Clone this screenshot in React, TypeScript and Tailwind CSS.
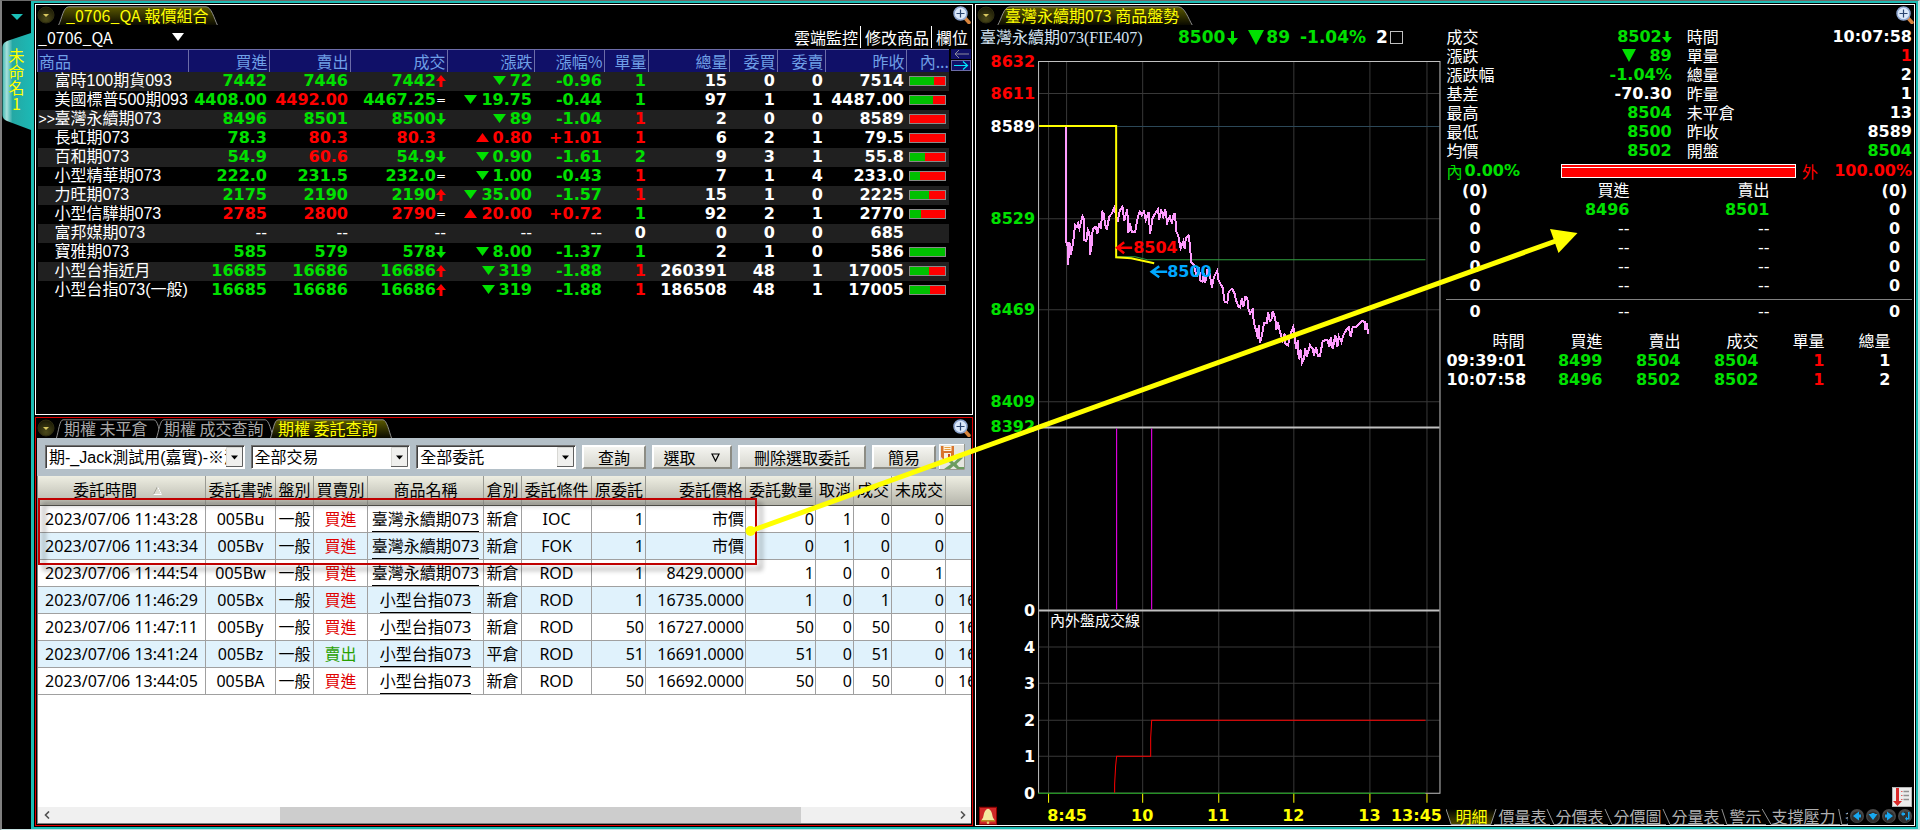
import React from "react";

const NUM = "[font-family:'DejaVu_Sans','Noto_Sans_CJK_TC',sans-serif] font-bold text-[16px]";

type Tone = "g" | "r" | "w";
const tone: Record<Tone, string> = {
  g: "text-[#00e000]",
  r: "text-[#ff0000]",
  w: "text-white",
};

function ArrowMark({ dir }: { dir: "up" | "down" }) {
  return (
    <svg width="10" height="12" viewBox="0 0 10 12" className="inline-block align-[-1px]" aria-hidden="true">
      {dir === "up" ? (
        <path d="M5 0 L10 6 H6.5 V12 H3.5 V6 H0 Z" fill="#ff0000" />
      ) : (
        <path d="M5 12 L0 6 H3.5 V0 H6.5 V6 H10 Z" fill="#00e000" />
      )}
    </svg>
  );
}

function Triangle({ up }: { up?: boolean }) {
  return (
    <svg width="13" height="9" viewBox="0 0 13 9" className="mr-1 inline-block align-[1px]" aria-hidden="true">
      {up ? <path d="M6.500 0 L13 9 H0 Z" fill="#ff0000" /> : <path d="M0 0 H13 L6.500 9 Z" fill="#00e000" />}
    </svg>
  );
}

function Magnifier() {
  return (
    <button aria-label="放大" className="block size-[18px] shrink-0">
      <svg viewBox="0 0 18 18" width="18" height="18">
        <path d="M12 12 L16 16.500" stroke="#d8843c" strokeWidth="3.500" strokeLinecap="round" />
        <circle cx="7.500" cy="7.500" r="6.500" fill="#dbe8fa" stroke="#8ea6d0" strokeWidth="1.500" />
        <path d="M7.500 3.500 V11.500 M3.500 7.500 H11.500" stroke="#2a4470" strokeWidth="1.200" />
      </svg>
    </button>
  );
}

function MenuDot() {
  return (
    <button aria-label="選單" className="block size-[18px] shrink-0">
      <svg viewBox="0 0 18 18" width="18" height="18">
        <defs>
          <radialGradient id="dot" cx="0.5" cy="0.75" r="0.7">
            <stop offset="0" stopColor="#4c4a1a" />
            <stop offset="1" stopColor="#1c1b06" />
          </radialGradient>
        </defs>
        <circle cx="9" cy="9" r="8" fill="url(#dot)" stroke="#2e2c10" />
        <path d="M6 8 H12 L9 11 Z" fill="#d8c860" />
      </svg>
    </button>
  );
}

function Tab({ label, active, className }: { label: string; active?: boolean; className: string }) {
  return (
    <button
      className={`relative h-[19px] shrink-0 whitespace-nowrap pl-2 text-left text-[16px] leading-[19px] ${
        active ? "text-[#ffff00]" : "text-[#a8a8a8]"
      } ${className}`}
    >
      <svg className="absolute inset-0 size-full" viewBox="0 0 120 19" preserveAspectRatio="none" aria-hidden="true">
        <defs>
          <linearGradient id="tabfill" x1="0" y1="0" x2="0" y2="1">
            <stop offset="0" stopColor="#5c5a00" />
            <stop offset="1" stopColor="#0a0a00" />
          </linearGradient>
        </defs>
        <path
          d="M0.5 19 C3 12 4 1 8 0.8 H111 C115 1 117 12 119.500 19"
          fill={active ? "url(#tabfill)" : "#000000"}
          stroke="#8c8c8c"
          vectorEffect="non-scaling-stroke"
        />
      </svg>
      <span className="relative">{label}</span>
    </button>
  );
}

type Quote = {
  name: string;
  bid: [string, Tone];
  ask: [string, Tone];
  last: [string, Tone];
  mark: "up" | "down" | "=" | "" | null;
  chg: [string, Tone];
  pct: string;
  vol: [string, Tone];
  total: string;
  wb: string;
  ws: string;
  prev: string;
  inner: number | null;
};

const quotes: Quote[] = [
  { name: "富時100期貨093", bid: ["7442", "g"], ask: ["7446", "g"], last: ["7442", "g"], mark: "up", chg: ["72", "g"], pct: "-0.96", vol: ["1", "g"], total: "15", wb: "0", ws: "0", prev: "7514", inner: 68 },
  { name: "美國標普500期093", bid: ["4408.00", "g"], ask: ["4492.00", "r"], last: ["4467.25", "g"], mark: "=", chg: ["19.75", "g"], pct: "-0.44", vol: ["1", "g"], total: "97", wb: "1", ws: "1", prev: "4487.00", inner: 65 },
  { name: "臺灣永續期073", bid: ["8496", "g"], ask: ["8501", "g"], last: ["8500", "g"], mark: "down", chg: ["89", "g"], pct: "-1.04", vol: ["1", "r"], total: "2", wb: "0", ws: "0", prev: "8589", inner: 0 },
  { name: "長虹期073", bid: ["78.3", "g"], ask: ["80.3", "r"], last: ["80.3", "r"], mark: "", chg: ["0.80", "r"], pct: "+1.01", vol: ["1", "r"], total: "6", wb: "2", ws: "1", prev: "79.5", inner: 0 },
  { name: "百和期073", bid: ["54.9", "g"], ask: ["60.6", "r"], last: ["54.9", "g"], mark: "down", chg: ["0.90", "g"], pct: "-1.61", vol: ["2", "g"], total: "9", wb: "3", ws: "1", prev: "55.8", inner: 43 },
  { name: "小型精華期073", bid: ["222.0", "g"], ask: ["231.5", "g"], last: ["232.0", "g"], mark: "=", chg: ["1.00", "g"], pct: "-0.43", vol: ["1", "r"], total: "7", wb: "1", ws: "4", prev: "233.0", inner: 29 },
  { name: "力旺期073", bid: ["2175", "g"], ask: ["2190", "g"], last: ["2190", "g"], mark: "up", chg: ["35.00", "g"], pct: "-1.57", vol: ["1", "r"], total: "15", wb: "1", ws: "0", prev: "2225", inner: 54 },
  { name: "小型信驊期073", bid: ["2785", "r"], ask: ["2800", "r"], last: ["2790", "r"], mark: "=", chg: ["20.00", "r"], pct: "+0.72", vol: ["1", "g"], total: "92", wb: "2", ws: "1", prev: "2770", inner: 32 },
  { name: "富邦媒期073", bid: ["--", "w"], ask: ["--", "w"], last: ["--", "w"], mark: null, chg: ["--", "w"], pct: "--", vol: ["0", "w"], total: "0", wb: "0", ws: "0", prev: "685", inner: null },
  { name: "寶雅期073", bid: ["585", "g"], ask: ["579", "g"], last: ["578", "g"], mark: "down", chg: ["8.00", "g"], pct: "-1.37", vol: ["1", "g"], total: "2", wb: "1", ws: "0", prev: "586", inner: 100 },
  { name: "小型台指近月", bid: ["16685", "g"], ask: ["16686", "g"], last: ["16686", "g"], mark: "up", chg: ["319", "g"], pct: "-1.88", vol: ["1", "r"], total: "260391", wb: "48", ws: "1", prev: "17005", inner: 54 },
  { name: "小型台指073(一般)", bid: ["16685", "g"], ask: ["16686", "g"], last: ["16686", "g"], mark: "up", chg: ["319", "g"], pct: "-1.88", vol: ["1", "r"], total: "186508", wb: "48", ws: "1", prev: "17005", inner: 57 },
];

/* Prices are bold; the empty marker "--" is set in the regular weight. */
function Price({ v }: { v: string }) {
  return v === "--" ? <span className="font-normal text-white">--</span> : <>{v}</>;
}

function QuoteTable() {
  const heads = ["買進", "賣出", "成交", "漲跌", "漲幅%", "單量", "總量", "委買", "委賣", "昨收"];
  const td = "p-0 pr-0.5 text-right";
  return (
    <table className="w-full table-fixed border-collapse whitespace-nowrap">
      <colgroup>
        <col />
        <col className="w-[81px]" />
        <col className="w-[81px]" />
        <col className="w-[97px]" />
        <col className="w-[87px]" />
        <col className="w-[70px]" />
        <col className="w-[44px]" />
        <col className="w-[81px]" />
        <col className="w-[48px]" />
        <col className="w-[48px]" />
        <col className="w-[81px]" />
        <col className="w-[43px]" />
      </colgroup>
      <thead>
        <tr className="h-[22px] bg-[#101068] text-[16px] leading-[20px] text-[#6f9fe6]">
          <th className="border-l border-t border-[#6c6ca8] p-0 pl-px text-left font-normal">商品</th>
          {heads.map((h) => (
            <th key={h} className="border-l border-t border-[#6c6ca8] p-0 pr-px text-right font-normal">
              {h}
            </th>
          ))}
          <th className="border-l border-t border-[#6c6ca8] p-0 text-right font-normal">內...</th>
        </tr>
      </thead>
      <tbody className={`${NUM} leading-[16px]`}>
        {quotes.map((q, i) => (
          <tr key={q.name} className={`h-[19px] ${i % 2 === 0 ? "bg-[#202020]" : "bg-black"}`}>
            <td className="p-0 text-[16px] font-normal text-white [font-family:'Liberation_Sans','Noto_Sans_CJK_TC',sans-serif]">
              <span className="flex h-[19px] items-center">
                <span className="w-[17px] shrink-0 pl-px text-[14px]">{i === 2 ? ">>" : ""}</span>
                <span>{q.name}</span>
              </span>
            </td>
            <td className={`${td} ${tone[q.bid[1]]}`}><Price v={q.bid[0]} /></td>
            <td className={`${td} ${tone[q.ask[1]]}`}><Price v={q.ask[0]} /></td>
            <td className={`p-0 pr-px ${tone[q.last[1]]}`}>
              <span className="flex h-[19px] items-center justify-end">
                <Price v={q.last[0]} />
                {q.mark === "up" || q.mark === "down" ? <ArrowMark dir={q.mark} /> : null}
                {q.mark === "=" && <span className="w-[10px] text-center text-[12px] font-normal text-white">=</span>}
                {q.mark === "" && <span className="w-[10px]" />}
              </span>
            </td>
            <td className={`${td} ${tone[q.chg[1]]}`}>
              {q.chg[0] !== "--" && <Triangle up={q.chg[1] === "r"} />}
              <Price v={q.chg[0]} />
            </td>
            <td className={`${td} ${tone[q.chg[1]]}`}><Price v={q.pct} /></td>
            <td className={`${td} ${tone[q.vol[1]]}`}>{q.vol[0]}</td>
            <td className={`${td} text-white`}>{q.total}</td>
            <td className={`${td} text-white`}>{q.wb}</td>
            <td className={`${td} text-white`}>{q.ws}</td>
            <td className={`${td} text-white`}>{q.prev}</td>
            <td className="p-0 px-[3px]">
              {q.inner !== null && (
                <div className="h-[10px] border border-[#8a8a8a] bg-[#ff0000]">
                  <div className="h-full bg-[#00c000]" style={{ width: `${q.inner}%` }} />
                </div>
              )}
            </td>
          </tr>
        ))}
      </tbody>
    </table>
  );
}

function QuotePanel() {
  return (
    <section className="flex h-[411px] flex-col border border-white bg-black text-white">
      <div className="flex h-[20px] items-center gap-[3px] pl-px pr-px">
        <MenuDot />
        <Tab label="_0706_QA 報價組合" active className="w-[160px]" />
        <div className="ml-auto"><Magnifier /></div>
      </div>
      <div className="flex h-[24px] items-center text-[16px] leading-[22px]">
        <button className="flex w-[148px] items-center justify-between pl-0.5">
          _0706_QA
          <svg width="12" height="8" viewBox="0 0 12 8" aria-hidden="true"><path d="M0 0 H12 L6 8 Z" fill="#fff" /></svg>
        </button>
        <div className="ml-auto flex items-center pr-1">
          <button className="pr-0.5">雲端監控</button>
          <button className="border-l border-white px-0.5 pl-1">修改商品</button>
          <button className="border-l border-white pl-1">欄位</button>
        </div>
      </div>
      <div className="flex min-h-0 flex-1 items-start pl-px">
        <div className="min-w-0 flex-1"><QuoteTable /></div>
        <div className="ml-0.5 mr-px flex w-[20px] shrink-0 flex-col gap-px">
          <button aria-label="上一欄" className="h-[10px] bg-[#101068]">
            <svg width="20" height="10" viewBox="0 0 20 10"><path d="M4 5 H18 M8 1 L4 5 L8 9" stroke="#8c8c9c" fill="none" /></svg>
          </button>
          <button aria-label="下一欄" className="h-[11px] border border-[#6c6ca8] bg-[#101068]">
            <svg width="18" height="9" viewBox="0 0 18 9"><path d="M2 4.500 H15 M11 0.500 L15.500 4.500 L11 8.500" stroke="#00e8ff" fill="none" strokeWidth="1.200" /></svg>
          </button>
        </div>
      </div>
    </section>
  );
}

type Order = [string, string, string, string, string, string, string, string, string, string, string, string, string];
const orders: Order[] = [
  ["2023/07/06 11:43:28", "005Bu", "買進", "臺灣永續期073", "新倉", "IOC", "1", "市價", "0", "1", "0", "0", ""],
  ["2023/07/06 11:43:34", "005Bv", "買進", "臺灣永續期073", "新倉", "FOK", "1", "市價", "0", "1", "0", "0", ""],
  ["2023/07/06 11:44:54", "005Bw", "買進", "臺灣永續期073", "新倉", "ROD", "1", "8429.0000", "1", "0", "0", "1", ""],
  ["2023/07/06 11:46:29", "005Bx", "買進", "小型台指073", "新倉", "ROD", "1", "16735.0000", "1", "0", "1", "0", "16"],
  ["2023/07/06 11:47:11", "005By", "買進", "小型台指073", "新倉", "ROD", "50", "16727.0000", "50", "0", "50", "0", "16"],
  ["2023/07/06 13:41:24", "005Bz", "賣出", "小型台指073", "平倉", "ROD", "51", "16691.0000", "51", "0", "51", "0", "16"],
  ["2023/07/06 13:44:05", "005BA", "買進", "小型台指073", "新倉", "ROD", "50", "16692.0000", "50", "0", "50", "0", "16"],
];

function OrderTable() {
  const th = "border-b border-r border-[#9a9a92] border-b-[#55554f] p-0 text-center font-normal";
  const thr = "border-b border-r border-[#9a9a92] border-b-[#55554f] p-0 pr-0.5 text-right font-normal";
  const c = "border-b border-r border-[#a0a0a0] p-0 text-center";
  const r = "border-b border-r border-[#a0a0a0] p-0 pr-px text-right";
  return (
    <table className="w-full table-fixed border-separate border-spacing-0 overflow-hidden whitespace-nowrap text-[16px] leading-[25px] text-black [font-family:'Noto_Sans','Noto_Sans_CJK_TC',sans-serif]">
      <colgroup>
        <col className="w-[168px]" />
        <col className="w-[70px]" />
        <col className="w-[38px]" />
        <col className="w-[54px]" />
        <col className="w-[116px]" />
        <col className="w-[38px]" />
        <col className="w-[70px]" />
        <col className="w-[54px]" />
        <col className="w-[100px]" />
        <col className="w-[70px]" />
        <col className="w-[38px]" />
        <col className="w-[38px]" />
        <col className="w-[54px]" />
        <col />
      </colgroup>
      <thead>
        <tr className="h-[30px] bg-linear-to-b from-[#eeeee2] to-[#b4b4aa]">
          <th className={th}>
            <span className="flex items-center justify-center gap-4 pr-2">
              <span>委託時間</span>
              <svg width="9" height="9" viewBox="0 0 9 9" aria-hidden="true">
                <path d="M4.500 0.500 L0.500 8.500 H8.500 Z" fill="#dcdcd0" stroke="#a4a49a" />
                <path d="M4.500 0.500 L8.500 8.500 H0.500" fill="none" stroke="#ffffff" />
              </svg>
            </span>
          </th>
          <th className={th}>委託書號</th>
          <th className={th}>盤別</th>
          <th className={th}>買賣別</th>
          <th className={th}>商品名稱</th>
          <th className={th}>倉別</th>
          <th className={th}>委託條件</th>
          <th className={thr}>原委託</th>
          <th className={thr}>委託價格</th>
          <th className={thr}>委託數量</th>
          <th className={thr}>取消</th>
          <th className={thr}>成交</th>
          <th className={thr}>未成交</th>
          <th className="border-b border-b-[#55554f] p-0" />
        </tr>
      </thead>
      <tbody>
        {orders.map((o, i) => (
          <tr key={o[1]} className={`h-[27px] ${i % 2 === 1 ? "bg-[#e0f2fc]" : "bg-white"}`}>
            <td className={c}>{o[0]}</td>
            <td className={c}>{o[1]}</td>
            <td className={c}>一般</td>
            <td className={`${c} ${o[2] === "買進" ? "text-[#e00000]" : "text-[#28a000]"}`}>{o[2]}</td>
            <td className={c}>
              <a href="#" className="block">
                <span className="inline-block h-[26px] border-b border-black align-top leading-[27px]">{o[3]}</span>
              </a>
            </td>
            <td className={c}>{o[4]}</td>
            <td className={c}>{o[5]}</td>
            <td className={r}>{o[6]}</td>
            <td className={r}>{o[7]}</td>
            <td className={r}>{o[8]}</td>
            <td className={r}>{o[9]}</td>
            <td className={r}>{o[10]}</td>
            <td className={r}>{o[11]}</td>
            <td className="overflow-hidden border-b border-[#a0a0a0] p-0 pl-3">{o[12]}</td>
          </tr>
        ))}
      </tbody>
    </table>
  );
}

function Dropdown({ label, value, className }: { label: string; value: string; className: string }) {
  return (
    <label className={`relative block h-[24px] border border-[#707070] border-b-white border-r-white bg-white ${className}`}>
      <select aria-label={label} className="block h-[22px] w-full appearance-none overflow-hidden border-l border-t border-[#404040] bg-white pl-0.5 pr-[18px] text-[16px] leading-[20px] text-black [font-family:'Liberation_Sans','Noto_Sans_CJK_TC',sans-serif]">
        <option>{value}</option>
      </select>
      <svg className="pointer-events-none absolute right-px top-px" width="17" height="20" viewBox="0 0 17 20" aria-hidden="true">
        <rect width="17" height="20" fill="#f0f0ee" />
        <path d="M0.500 19 V0.500 H16" stroke="#d8d8d4" fill="none" />
        <path d="M0 19.500 H16.500 V0" stroke="#606060" fill="none" />
        <path d="M5 8.500 H12 L8.500 12.500 Z" fill="#000" />
      </svg>
    </label>
  );
}

function ToolButton({ children, className }: { children: React.ReactNode; className: string }) {
  return (
    <button className={`flex h-[24px] shrink-0 items-center justify-center border-2 border-b-[#8c8c84] border-l-white border-r-[#8c8c84] border-t-white bg-linear-to-b from-[#f4f4f0] to-[#d8d8d0] text-[16px] leading-[20px] text-black ${className}`}>
      {children}
    </button>
  );
}

function OrderPanel() {
  return (
    <section className="flex min-h-0 flex-1 flex-col border border-[#e00000] bg-black p-px pt-0">
      <div className="flex h-[20px] shrink-0 items-center">
        <MenuDot />
        <Tab label="期權 未平倉" className="ml-px w-[106px]" />
        <Tab label="期權 成交查詢" className="-ml-1.5 w-[118px]" />
        <Tab label="期權 委託查詢" active className="-ml-1 w-[122px]" />
        <div className="ml-auto"><Magnifier /></div>
      </div>
      <div className="flex h-[38px] shrink-0 items-center gap-1.5 bg-[#b4c0c8] pl-2 pr-1.5">
        <Dropdown label="帳號" value="期-_Jack測試用(嘉實)-※測" className="w-[200px]" />
        <Dropdown label="交易" value="全部交易" className="w-[160px]" />
        <Dropdown label="委託" value="全部委託" className="w-[160px]" />
        <ToolButton className="w-[64px]">查詢</ToolButton>
        <ToolButton className="w-[80px] gap-4">
          <span>選取</span>
          <svg width="9" height="9" viewBox="0 0 9 9" aria-hidden="true"><path d="M1 1 H8 L4.500 8 Z" fill="none" stroke="#000" strokeWidth="1.200" /></svg>
        </ToolButton>
        <ToolButton className="w-[128px]">刪除選取委託</ToolButton>
        <ToolButton className="w-[64px]">簡易</ToolButton>
        <button aria-label="匯出" className="-ml-[3px] block size-[26px] shrink-0">
          <svg viewBox="0 0 26 26" width="26" height="26">
            <rect width="26" height="26" fill="#e6e6e0" />
            <path d="M0.500 26 V0.500 H26" stroke="#fff" fill="none" />
            <path d="M0 25.500 H25.500 V0" stroke="#98988e" fill="none" />
            <path d="M2 2 H15 V15 H4 L2 13 Z" fill="#d8742c" />
            <rect x="4.500" y="2" width="8" height="5" fill="#fff4e0" />
            <path d="M5.500 3.500 H11.500 M5.500 5.500 H11.500" stroke="#e8a040" />
            <rect x="5" y="9" width="7" height="6" fill="#f8f0e0" />
            <rect x="9" y="10" width="2" height="4" fill="#c84820" />
            <path d="M6 15 H11 L15 18.500 L20 13.500 H24.500 L17.500 20 L20 23 H25 V25 H18 L14.500 22 L11 25 H5 L12 20 Z" fill="#6c9c60" />
          </svg>
        </button>
      </div>
      <div className="flex min-h-0 flex-1 flex-col border-b border-l border-[#808080] bg-white">
        <div className="min-h-0 flex-1 overflow-hidden"><OrderTable /></div>
        <div className="flex h-[16px] shrink-0 bg-[#f0f0f0]">
          <button aria-label="向左捲動" className="flex w-[17px] items-center justify-center">
            <svg width="6" height="8" viewBox="0 0 6 8"><path d="M5 0.500 L1.500 4 L5 7.500" stroke="#505050" strokeWidth="1.600" fill="none" /></svg>
          </button>
          <div className="flex flex-1">
            <div className="w-[25%]" />
            <div className="w-[58%] bg-[#cdcdcd]" />
          </div>
          <button aria-label="向右捲動" className="flex w-[17px] items-center justify-center">
            <svg width="6" height="8" viewBox="0 0 6 8"><path d="M1 0.500 L4.500 4 L1 7.500" stroke="#505050" strokeWidth="1.600" fill="none" /></svg>
          </button>
        </div>
      </div>
    </section>
  );
}

/* Index trace, in thirds of a pixel measured from the left edge of the chart pane. */
const trace =
  "291,380 291,727 295,729 297,793 301,727 304,765 308,750 312,727 318,675 323,680 327,670 331,685 336,665 340,648 344,655 346,720 352,722 356,690 361,700 363,763 367,740 371,685 380,680 385,700 390,670 395,685 400,635 404,640 407,668 413,690 420,650 428,640 436,622 441,650 446,660 452,630 460,620 465,662 474,628 478,697 482,670 488,695 498,695 506,650 512,634 518,645 524,633 530,660 538,635 543,700 550,655 558,640 566,628 570,658 576,628 582,650 588,628 594,668 602,650 608,670 614,640 618,640 620,690 628,710 634,745 642,725 646,745 650,715 658,705 662,735 666,785 674,795 682,830 690,800 692,840 700,845 704,820 708,848 714,810 720,812 728,862 734,830 744,812 748,840 756,855 760,862 766,905 774,907 778,875 788,865 796,880 800,900 808,920 812,922 818,895 822,920 828,890 834,892 838,928 842,940 850,928 854,970 862,995 866,1015 868,975 872,1027 878,1005 884,968 892,968 897,937 901,962 906,960 910,933 918,955 921,990 926,965 932,995 940,1020 946,1000 948,1030 956,1035 960,1015 966,995 972,980 976,1005 980,1045 986,1020 988,1077 994,1048 998,1087 1004,1075 1008,1045 1012,1070 1022,1035 1030,1045 1034,1065 1040,1040 1046,1067 1052,1067 1060,1022 1068,1020 1074,1018 1080,1040 1084,1012 1090,1045 1098,1005 1104,1040 1108,1008 1116,1025 1122,1005 1130,990 1138,980 1144,1010 1150,980 1160,980 1168,972 1178,962 1186,965 1188,990 1192,970 1196,1000";

const yLabels: [string, number, string][] = [
  ["8632", 61, "#ff0000"],
  ["8611", 93, "#ff0000"],
  ["8589", 126, "#ffffff"],
  ["8529", 218, "#00e000"],
  ["8469", 309, "#00e000"],
  ["8409", 401, "#00e000"],
  ["8392", 426, "#00e000"],
  ["0", 609, "#ffffff"],
  ["4", 646, "#ffffff"],
  ["3", 682, "#ffffff"],
  ["2", 719, "#ffffff"],
  ["1", 755, "#ffffff"],
  ["0", 792, "#ffffff"],
];

function Chart() {
  return (
    <svg viewBox="977 50 464 775" className="block min-h-0 w-full flex-1 overflow-visible" aria-label="走勢圖">
      <g stroke="#383838" fill="none">
        <path d="M1049.500 62 V792 M1067.500 62 V792 M1143.500 62 V792 M1219.500 62 V792 M1294.500 62 V792 M1370.500 62 V792 M1427.500 62 V792" />
        <path d="M1040 93.500 H1440 M1040 218.500 H1440 M1040 309.500 H1440 M1040 401.500 H1440 M1040 646.500 H1440 M1040 682.500 H1440 M1040 719.500 H1440 M1040 755.500 H1440" />
      </g>
      <path d="M1040 126.500 H1440" stroke="#2c4858" />
      <path d="M1039.500 61.500 H1440.500 V792.500 H1039.500 Z" stroke="#c0c0c0" fill="none" />
      <path d="M1040 427 H1440 M1040 610 H1440" stroke="#c0c0c0" strokeWidth="2" />
      <path d="M1039 792.500 H1426" stroke="#009000" />
      <path d="M1117 256.500 H1136 L1148 259.500 H1426" stroke="#30a040" fill="none" />
      <g transform="translate(970 0) scale(0.333333)">
        <polyline points={trace} stroke="#ff9cff" strokeWidth="6" fill="none" shapeRendering="crispEdges" />
      </g>
      <path d="M1040 126 H1117 V257 L1132 258 L1155 263" stroke="#ffff00" strokeWidth="2" fill="none" />
      <path d="M1117.500 428 V609 M1152.500 428 V609" stroke="#ff00ff" />
      <path d="M1115.500 792 V783 L1116.500 765 L1117.500 755.500 H1151.500 V737 L1152.500 719.500 H1426" stroke="#ff0000" fill="none" />
      <path d="M1049.500 793 V802 M1143.500 793 V802 M1219.500 793 V802 M1294.500 793 V802 M1370.500 793 V802 M1427.500 793 V802" stroke="#ffff00" />
      <path d="M1133 247.500 H1119 M1125 242 L1118 247.500 L1125 253" stroke="#ff0000" strokeWidth="2.500" fill="none" />
      <path d="M1168 271.500 H1153 M1160 266 L1152.500 271.500 L1160 277" stroke="#00a8ff" strokeWidth="2.500" fill="none" />
      <g className={NUM}>
        {yLabels.map(([t, y, color]) => (
          <text key={`${t}-${y}`} x="1036" y={y + 6} textAnchor="end" fill={color}>{t}</text>
        ))}
        <text x="1134" y="253" fill="#ff0000">8504</text>
        <text x="1168" y="277" fill="#00a8ff">8500</text>
        <g fill="#ffff00" textAnchor="middle">
          <text x="1068" y="820">8:45</text>
          <text x="1143" y="820">10</text>
          <text x="1219" y="820">11</text>
          <text x="1294" y="820">12</text>
          <text x="1370" y="820">13</text>
          <text x="1417" y="820">13:45</text>
        </g>
      </g>
      <text x="1051" y="625" fill="#fff" className="text-[15px]">內外盤成交線</text>
      <g>
        <rect x="980.500" y="806.500" width="17" height="17" fill="#d02828" stroke="#900000" />
        <path d="M989 808 C985 809 985 814 984 817 L982 820 H996 L994 817 C993 814 993 809 989 808 Z" fill="#f4e8a0" />
        <path d="M982 820 H996" stroke="#b89020" strokeWidth="1.500" />
        <circle cx="989" cy="822" r="1.300" fill="#e8d070" />
      </g>
    </svg>
  );
}

function InfoRow({ a, av, at, b, bv, bt }: { a: string; av: React.ReactNode; at: Tone; b: string; bv: string; bt: Tone }) {
  return (
    <div className="grid h-[19px] shrink-0 grid-cols-2 gap-[15px] text-[16px] leading-[19px]">
      <div className="flex justify-between">
        <span>{a}</span>
        <span className={`${NUM} ${tone[at]}`}>{av}</span>
      </div>
      <div className="flex justify-between">
        <span>{b}</span>
        <span className={`${NUM} ${tone[bt]}`}>{bv}</span>
      </div>
    </div>
  );
}

function DepthTable() {
  const rows: [string, string, string, string][] = [
    ["0", "8496", "8501", "0"],
    ["0", "--", "--", "0"],
    ["0", "--", "--", "0"],
    ["0", "--", "--", "0"],
    ["0", "--", "--", "0"],
  ];
  return (
    <table className={`w-full shrink-0 table-fixed border-separate border-spacing-0 leading-[16px] ${NUM}`}>
      <colgroup>
        <col className="w-[57px]" />
        <col className="w-[126px]" />
        <col className="w-[140px]" />
        <col />
        <col className="w-[35px]" />
      </colgroup>
      <thead>
        <tr className="h-[19px]">
          <th className="p-0 text-center">(0)</th>
          <th className="p-0 text-right font-normal">買進</th>
          <th className="p-0 text-right font-normal">賣出</th>
          <th className="p-0" />
          <th className="p-0 text-center">(0)</th>
        </tr>
      </thead>
      <tbody>
        {rows.map((r, i) => (
          <tr key={i} className="h-[19px]">
            <td className="p-0 text-center">{r[0]}</td>
            <td className="p-0 text-right text-[#00e000]"><Price v={r[1]} /></td>
            <td className="p-0 text-right text-[#00e000]"><Price v={r[2]} /></td>
            <td className="p-0" />
            <td className="p-0 text-center">{r[3]}</td>
          </tr>
        ))}
        <tr className="h-[5px]"><td colSpan={5} className="border-b border-[#808080] p-0" /></tr>
        <tr className="h-[24px]">
          <td className="p-0 text-center">0</td>
          <td className="p-0 text-right"><Price v="--" /></td>
          <td className="p-0 text-right"><Price v="--" /></td>
          <td className="p-0" />
          <td className="p-0 text-center">0</td>
        </tr>
      </tbody>
    </table>
  );
}

function TickTable() {
  const rows = [
    ["09:39:01", "8499", "8504", "8504", "1", "1"],
    ["10:07:58", "8496", "8502", "8502", "1", "2"],
  ];
  const cell = ["text-white", "text-[#00e000]", "text-[#00e000]", "text-[#00e000]", "text-[#ff0000]", "text-white"];
  return (
    <table className={`w-full shrink-0 table-fixed border-separate border-spacing-0 leading-[16px] ${NUM}`}>
      <colgroup>
        <col className="w-[78px]" />
        <col className="w-[78px]" />
        <col className="w-[78px]" />
        <col className="w-[78px]" />
        <col className="w-[66px]" />
        <col className="w-[66px]" />
        <col />
      </colgroup>
      <thead>
        <tr className="h-[19px]">
          {["時間", "買進", "賣出", "成交", "單量", "總量"].map((h) => (
            <th key={h} className="p-0 text-right font-normal">{h}</th>
          ))}
          <th className="p-0" />
        </tr>
      </thead>
      <tbody>
        {rows.map((r) => (
          <tr key={r[0]} className="h-[19px]">
            {r.map((v, i) => (
              <td key={i} className={`p-0 text-right ${cell[i]}`}>{v}</td>
            ))}
            <td className="p-0" />
          </tr>
        ))}
      </tbody>
    </table>
  );
}

function FooterTab({ label, kind, className }: { label: string; kind: "active" | "first" | "rest"; className: string }) {
  const shape = {
    active: "M0 0 L6 15.500 H52 L58 0",
    first: "M0 15.500 H58",
    rest: "M-3 0 L4 15.500 H58",
  }[kind];
  return (
    <button className={`relative h-[16px] shrink-0 whitespace-nowrap text-[16px] leading-[15px] ${kind === "active" ? "text-[#ffff00]" : "text-[#b0b0b0]"} ${className}`}>
      <svg className="absolute inset-0 size-full overflow-visible" viewBox="0 0 58 16" preserveAspectRatio="none" aria-hidden="true">
        <defs>
          <linearGradient id="foottab" x1="0" y1="0" x2="0" y2="1">
            <stop offset="0" stopColor="#000000" />
            <stop offset="1" stopColor="#504c00" />
          </linearGradient>
        </defs>
        <path d={shape} fill={kind === "active" ? "url(#foottab)" : "none"} stroke="#909090" vectorEffect="non-scaling-stroke" />
      </svg>
      <span className="relative">{label}</span>
    </button>
  );
}

function RoundButton({ label, d }: { label: string; d: string }) {
  return (
    <button aria-label={label} className="block size-[14px] shrink-0">
      <svg viewBox="0 0 14 14" width="14" height="14">
        <circle cx="7" cy="7" r="7" fill="#484848" />
        <circle cx="7" cy="8" r="5.500" fill="#303030" />
        <path d={d} fill="#18a8f0" />
      </svg>
    </button>
  );
}

function Details() {
  return (
    <div className="flex min-w-0 flex-col pl-[6px] pr-0.5 pt-0.5 text-white">
      <InfoRow a="成交" av={<span>8502<ArrowMark dir="down" /></span>} at="g" b="時間" bv="10:07:58" bt="w" />
      <InfoRow
        a="漲跌"
        av={
          <span className="flex items-center gap-[13px]">
            <svg width="14" height="13" viewBox="0 0 14 13" aria-hidden="true"><path d="M0 0 H14 L7 13 Z" fill="#00e000" /></svg>
            89
          </span>
        }
        at="g" b="單量" bv="1" bt="r"
      />
      <InfoRow a="漲跌幅" av="-1.04%" at="g" b="總量" bv="2" bt="w" />
      <InfoRow a="基差" av="-70.30" at="w" b="昨量" bv="1" bt="w" />
      <InfoRow a="最高" av="8504" at="g" b="未平倉" bv="13" bt="w" />
      <InfoRow a="最低" av="8500" at="g" b="昨收" bv="8589" bt="w" />
      <InfoRow a="均價" av="8502" at="g" b="開盤" bv="8504" bt="g" />
      <div className="flex h-[21px] shrink-0 items-center text-[16px] leading-[20px]">
        <span className="flex w-[115px] shrink-0 gap-0.5 text-[#00e000]">
          <span>內</span>
          <span className={NUM}>0.00%</span>
        </span>
        <div className="h-[14px] flex-1 border border-white bg-[#ff0000]">
          <div className="h-[3px] border-b border-white" />
        </div>
        <span className="flex w-[116px] shrink-0 justify-between pl-[6px] text-[#ff0000]">
          <span>外</span>
          <span className={NUM}>100.00%</span>
        </span>
      </div>
      <DepthTable />
      <div className="h-2 shrink-0" />
      <TickTable />
      <div className="mt-auto flex justify-end">
        <button aria-label="清單" className="block size-[20px]">
          <svg viewBox="0 0 20 20" width="20" height="20">
            <rect x="0.500" y="0.500" width="19" height="19" fill="#ececec" stroke="#b4b4b4" />
            <path d="M4 1 H7 V14 H10 L5.500 19 L1 14 H4 Z" fill="#d82828" />
            <path d="M9 4.500 H10.500 M9 8.500 H10.500 M9 12.500 H10.500" stroke="#e06060" />
            <path d="M11.500 4.500 H17 M11.500 8.500 H17 M11.500 12.500 H17" stroke="#909090" strokeWidth="1.500" />
          </svg>
        </button>
      </div>
      <div className="mt-0.5 flex h-[17px] shrink-0 items-start gap-0.5">
        <div className="flex min-w-0 flex-1 overflow-hidden">
          <FooterTab label="明細" kind="active" className="w-[50px] text-center" />
          <FooterTab label="價量表" kind="first" className="-ml-0.5 w-[56px] text-center" />
          <FooterTab label="分價表" kind="rest" className="w-[58px] text-center" />
          <FooterTab label="分價圖" kind="rest" className="w-[58px] text-center" />
          <FooterTab label="分量表" kind="rest" className="w-[58px] text-center" />
          <FooterTab label="警示" kind="rest" className="w-[42px] text-center" />
          <FooterTab label="支撐壓力" kind="rest" className="w-[74px] text-center" />
          <FooterTab label="多" kind="rest" className="w-[26px] pl-1 text-left" />
        </div>
        <RoundButton label="左" d="M9 2.500 V5.500 H11 V8.500 H9 V11.500 L3 7 Z" />
        <RoundButton label="下" d="M2.500 5 H5.500 V4 H8.500 V5 H11.500 L7 11 Z" />
        <RoundButton label="右" d="M5 2.500 L11 7 L5 11.500 V8.500 H3 V5.500 H5 Z" />
        <RoundButton label="換行" d="M3 5 L5.500 2.500 V4 H7 V6 H5.500 V7.500 Z M7 9.500 L9 7.500 V9 H10 V3 H11.500 V10.500 H9 V12 Z" />
      </div>
    </div>
  );
}

function ChartPanel() {
  return (
    <section className="flex min-w-0 flex-1 flex-col border border-white bg-black text-white">
      <div className="flex h-[20px] shrink-0 items-center gap-0.5 pl-px">
        <MenuDot />
        <Tab label="臺灣永續期073 商品盤勢" active className="w-[196px]" />
        <div className="ml-auto"><Magnifier /></div>
      </div>
      <div className="grid min-h-0 flex-1 grid-cols-[minmax(0,464fr)_minmax(0,473fr)]">
        <div className="flex min-w-0 flex-col">
          <div className="flex h-[25px] shrink-0 items-center pl-1 text-[17px] leading-[25px] [font-family:'DejaVu_Sans',sans-serif]">
            <h1 className="w-[198px] whitespace-nowrap text-[16px] font-normal text-[#d4e4f4] [font-family:'Liberation_Serif','Noto_Sans_CJK_TC',serif]">
              臺灣永續期073(FIE407)
            </h1>
            <div className="flex items-center font-bold text-[#00e000]">
              8500
              <svg width="11" height="14" viewBox="0 0 11 14" className="ml-0.5" aria-hidden="true"><path d="M5.500 14 L0 7 H4 V0 H7 V7 H11 Z" fill="#00e000" /></svg>
              <svg width="16" height="15" viewBox="0 0 16 15" className="ml-2.5" aria-hidden="true"><path d="M0 0 H16 L8 15 Z" fill="#00e000" /></svg>
              <span className="ml-0.5">89</span>
              <span className="ml-2.5">-1.04%</span>
              <span className="ml-2.5 text-white">2</span>
              <span className="ml-0.5 size-[13px] border border-[#c0c0c0]" />
            </div>
          </div>
          <Chart />
        </div>
        <Details />
      </div>
    </section>
  );
}

function SideRail() {
  return (
    <nav className="flex w-[29px] shrink-0 flex-col bg-black">
      <button aria-label="展開" className="flex h-[32px] items-center justify-center">
        <svg width="12" height="6" viewBox="0 0 12 6"><path d="M0 0 H12 L6 6 Z" fill="#1cc0b8" /></svg>
      </button>
      <button className="relative flex h-[97px] justify-center pb-[18px] pt-[15px] text-[16px] leading-[20px] text-[#ffff00]">
        <svg className="absolute inset-0 size-full" viewBox="0 0 29 97" preserveAspectRatio="none" aria-hidden="true">
          <defs>
            <linearGradient id="rail" x1="0" y1="0" x2="1" y2="0">
              <stop offset="0" stopColor="#40b8b0" />
              <stop offset="0.150" stopColor="#a8e0dc" />
              <stop offset="0.350" stopColor="#24a8a4" />
              <stop offset="1" stopColor="#1cb8b4" />
            </linearGradient>
          </defs>
          <path d="M29 0 L5 8 Q0.500 10 0.500 14 V82 Q0.500 86 5 88 L29 97 Z" fill="url(#rail)" />
        </svg>
        <span className="relative [text-orientation:upright] [writing-mode:vertical-rl]">未命名1</span>
      </button>
    </nav>
  );
}

export default function App() {
  return (
    <div className="relative flex h-screen min-h-[700px] overflow-hidden border-b border-l-2 border-r-2 border-t border-b-[#c8e4e4] border-l-[#808080] border-r-[#c8e4e4] border-t-[#6c6c6c] bg-black [font-family:'Noto_Sans_CJK_TC',sans-serif]">
      <SideRail />
      <main className="flex min-w-0 flex-1 gap-0.5 border-2 border-l-[3px] border-[#1cbcb4] p-px">
        <div className="flex min-w-0 flex-1 flex-col gap-0.5">
          <QuotePanel />
          <OrderPanel />
        </div>
        <ChartPanel />
      </main>
      <svg className="pointer-events-none absolute -left-0.5 -top-px h-screen w-screen" viewBox="0 0 1920 830" preserveAspectRatio="none" aria-hidden="true">
        <defs>
          <filter id="shade" x="-5%" y="-20%" width="110%" height="150%">
            <feDropShadow dx="5" dy="5" stdDeviation="2.500" floodColor="#000" floodOpacity="0.450" />
          </filter>
        </defs>
        <rect x="39" y="499" width="717" height="65" fill="none" stroke="#c00000" strokeWidth="2" filter="url(#shade)" />
        <path d="M750.500 531 L1560 239.500" stroke="#ffff00" strokeWidth="5" />
        <circle cx="750.500" cy="531" r="5" fill="#ffff00" />
        <path d="M1577.500 233 L1550 229 L1558.500 253 Z" fill="#ffff00" />
      </svg>
    </div>
  );
}
